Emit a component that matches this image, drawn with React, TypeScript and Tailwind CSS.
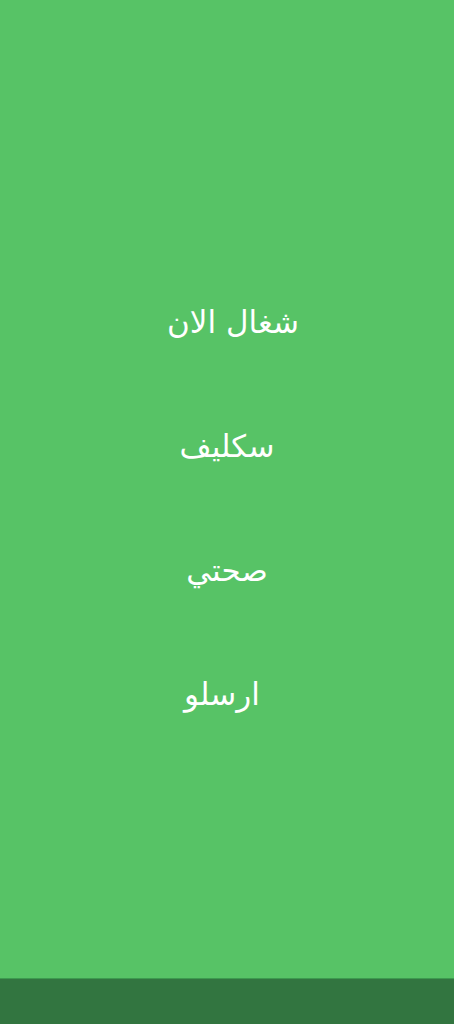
export default function App() {
  const items = ["شغال الان", "سكليف", "صحتي", "ارسلو"];

  return (
    <div className="flex h-[1024px] w-full flex-col bg-[#57c366]">
      <div
        dir="rtl"
        className="flex flex-1 flex-col items-center gap-[84px] pt-[302px] text-[31px] leading-[40px] text-white"
        style={{ fontFamily: '"DejaVu Sans", "Noto Sans", sans-serif' }}
      >
        {items.map((t, i) => (
          <div key={t} className={i === 0 ? "mr-[-12px]" : i === 3 ? "mr-[10px]" : ""}>
            {t}
          </div>
        ))}
      </div>
      <div className="h-[46px] w-full border-t border-[#3d9a4f] bg-[#327540]" />
    </div>
  );
}
